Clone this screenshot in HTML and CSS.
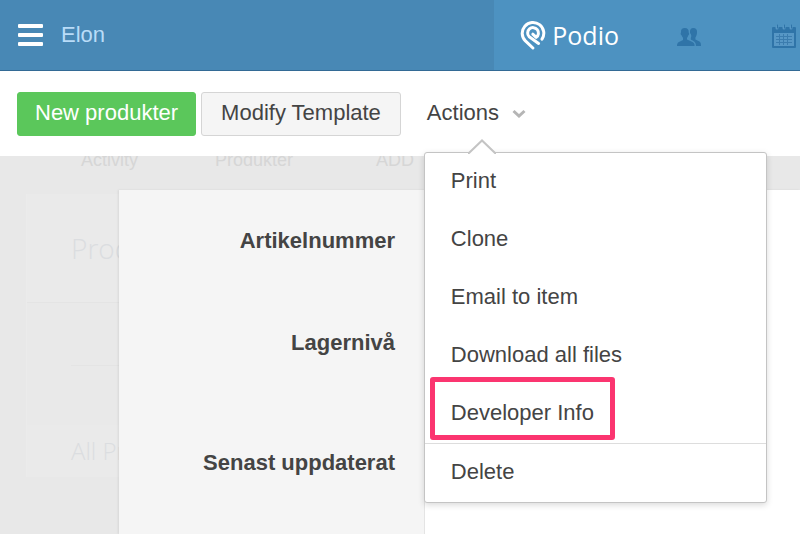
FILE: index.html
```html
<!DOCTYPE html>
<html lang="en">
<head>
<meta charset="UTF-8">
<meta name="viewport" content="width=device-width, initial-scale=1.0">
<title>Elon - Podio</title>
<link rel="stylesheet" href="styles.css">
</head>
<body>
<header class="header">
    <div class="workspace">
        <button class="menu-toggle" aria-label="Open menu">
            <span class="bar"></span>
            <span class="bar"></span>
            <span class="bar"></span>
        </button>
        <a class="workspace-name" href="#">Elon</a>
    </div>
    <nav class="main-nav">
        <a class="logo" href="#">
            <svg width="26" height="30" viewBox="0 0 26 30" fill="none" stroke="#fff" stroke-width="3" stroke-linecap="round" stroke-linejoin="round">
                <path d="M12.9 28 L5.4 20.9 A10.8 10.8 0 1 1 22 19.2"/>
                <path d="M18.600 23.400 L9.200 16.800 A5.4 5.4 0 1 1 16.200 17.400 L12.8 14.2"/>
            </svg>
            <span>Podio</span>
        </a>
        <a class="nav-icon" href="#" aria-label="People">
            <svg width="26" height="26" viewBox="0 0 26 26" fill="#2f74a8">
                <path d="M14 9 C13.6 5.500 15 4 17.200 4 C20 4 21.400 5.800 21 9 C20.800 11.400 20 12.400 19.400 13.400 L19.400 15.500 L23.500 17.600 C24.600 18.300 25 19.500 25 22 L20 22 C19.800 18.800 19 17.600 15.500 16 L14.800 15.500 L14.800 14 C15.600 12.600 15.500 10.500 14 9 Z"/>
                <path d="M5 8.500 C4.700 5.300 6.200 4 8.800 4 C11.600 4 13 5.600 12.700 8.500 C13.600 9.400 13 11 12.200 11.500 C11.900 12.700 11.500 13.300 11 13.800 L11 15.600 L16 17.800 C18 18.700 18.600 19.800 18.600 22 L1 22 C1 19.500 1.600 18.600 3 17.900 L7 15.900 L7 13.800 C6.400 13.200 6 12.500 5.700 11.500 C4.800 11 4.300 9.400 5 8.500 Z"/>
            </svg>
        </a>
        <a class="nav-icon" href="#" aria-label="Calendar">
            <svg width="26" height="26" viewBox="0 0 26 26">
                <path fill="#2f74a8" d="M2 3 H24 Q25 3 25 4 V23 Q25 24 24 24 H2 Q1 24 1 23 V4 Q1 3 2 3 Z"/>
                <path fill="#5797c5" d="M3 9 H23 V22 H3 Z"/>
                <path stroke="#3b7cae" d="M5 12.500 H21 M5 15.500 H21 M5 18.500 H21 M8.500 10 V21 M12.500 10 V21 M16.500 10 V21"/>
                <path stroke="#5797c5" stroke-width="3" stroke-linecap="round" d="M6 3 V4 M13 3 V4 M20 3 V4"/>
                <path stroke="#2f74a8" stroke-linecap="round" d="M6.500 1 V4 M13.500 1 V4 M20.500 1 V4"/>
            </svg>
        </a>
    </nav>
</header>

<div class="toolbar">
    <button class="btn btn-primary">New produkter</button>
    <button class="btn btn-default">Modify Template</button>
    <div class="dropdown">
        <button class="dropdown-toggle" aria-expanded="true">
            Actions
            <svg width="14" height="10" viewBox="0 0 14 10" fill="none" stroke="#b5b5b5" stroke-width="3">
                <path d="M1.500 3 L7 8 L12.500 3"/>
            </svg>
        </button>
        <div class="dropdown-menu">
            <svg class="arrow" width="28" height="15" viewBox="0 0 28 15">
                <path fill="#fff" stroke="#c4c4c4" stroke-width="2" d="M0 15 L14 1.500 L28 15"/>
            </svg>
            <ul>
                <li><a href="#">Print</a></li>
                <li><a href="#">Clone</a></li>
                <li><a href="#">Email to item</a></li>
                <li><a href="#">Download all files</a></li>
                <li><a href="#"><span class="highlight">Developer Info</span></a></li>
                <li class="separated"><a href="#">Delete</a></li>
            </ul>
        </div>
    </div>
</div>

<main class="content">
    <!-- Faded app page behind the item -->
    <div class="backdrop">
        <div class="tabs">
            <span>Activity</span>
            <span>Produkter</span>
            <span class="add">ADD</span>
        </div>
        <div class="app">
            <h1>Produkter</h1>
            <div class="app-body"><hr></div>
            <h2>All Produkter</h2>
        </div>
    </div>

    <!-- Item -->
    <div class="item">
        <dl class="fields">
            <dt>Artikelnummer</dt>
            <dt>Lagernivå</dt>
            <dt class="updated">Senast uppdaterat</dt>
        </dl>
        <div class="values"></div>
    </div>
</main>
</body>
</html>
```
FILE: styles.css
```css
* {
    box-sizing: border-box;
}
body {
    display: flex;
    flex-direction: column;
    min-height: 100vh;
    margin: 0;
    font-family: "Liberation Sans", Arial, sans-serif;
    font-size: 22px;
    color: #444;
    background-color: #fff;
}
a {
    color: inherit;
    text-decoration: none;
}
button {
    font: inherit;
    color: inherit;
    cursor: pointer;
}
svg {
    display: block;
}

/* Header */
.header {
    display: flex;
    height: 71px;
    background-color: #4888b5;
    border-bottom: 1px solid #336a95;
}
.workspace {
    display: flex;
    flex: 1;
    align-items: center;
    gap: 18px;
    padding-left: 18px;
}
.menu-toggle {
    display: flex;
    flex-direction: column;
    gap: 5px;
    padding: 0;
    border: none;
    background: none;
}
.bar {
    width: 25px;
    height: 4px;
    border-radius: 1px;
    background-color: #fff;
}
.workspace-name {
    color: #b9dcf8;
}
.main-nav {
    display: flex;
    align-items: center;
    padding: 0 3px 0 26px;
    background-color: #4d92c1;
}
.logo {
    display: flex;
    align-items: center;
    gap: 6px;
    margin-right: 57px;
    font-family: "Open Sans", sans-serif;
    font-size: 25px;
    font-weight: 500;
    color: #fff;
}
.nav-icon {
    padding-top: 3px;
}
.nav-icon + .nav-icon {
    margin-left: 69px;
}

/* Toolbar */
.toolbar {
    display: flex;
    align-items: center;
    gap: 5px;
    height: 85px;
    padding: 0 17px;
}
.btn {
    height: 44px;
    padding: 0 17px 2px;
    border: 1px solid #d5d5d5;
    border-radius: 3px;
}
.btn-primary {
    border-color: #5bc75b;
    background-color: #5bc75b;
    color: #fff;
}
.btn-default {
    padding: 0 19px 2px;
    background-color: #f5f5f5;
}
.dropdown {
    position: relative;
    margin-left: 18px;
}
.dropdown-toggle {
    display: flex;
    align-items: center;
    gap: 13px;
    height: 44px;
    padding: 0 3px 2px;
    border: none;
    background: none;
}
.dropdown-menu {
    position: absolute;
    z-index: 10;
    top: 60px;
    left: 0;
    width: 343px;
    border: 1px solid #c4c4c4;
    border-radius: 3px;
    background-color: #fff;
    box-shadow: 0 2px 6px rgba(0, 0, 0, 0.15);
}
.dropdown-menu ul {
    margin: 0;
    padding: 0;
    list-style: none;
}
.dropdown-menu a {
    display: block;
    padding: 0 26px 2px;
    line-height: 56px;
}
.arrow {
    position: absolute;
    top: -14px;
    left: 43px;
}
.separated {
    border-top: 1px solid #ddd;
}
.highlight {
    position: relative;
}
.highlight::after {
    content: "";
    position: absolute;
    inset: -23px -21px -15px;
    border: 5px solid #fb3570;
    border-radius: 3px;
}

/* Content */
.content {
    position: relative;
    flex: 1;
    overflow: hidden;
    background-color: #e8e8e8;
}
.tabs {
    display: flex;
    gap: 77px;
    height: 44px;
    margin-top: -6px;
    padding-left: 81px;
    font-size: 18px;
    line-height: 20px;
    color: #d6d6d6;
}
.add {
    padding-left: 6px;
}
.app {
    margin-left: 26px;
    border-left: 1px solid #ebebeb;
    background-color: #e9e9e9;
    font-family: "Open Sans", sans-serif;
    color: #dbdde0;
}
.app h1,
.app h2 {
    margin: 0;
    padding-left: 44px;
    font-weight: 300;
    background-color: #eaeaea;
}
.app h1 {
    font-size: 28px;
    line-height: 108px;
    border-bottom: 1px solid #e4e4e4;
}
.app h2 {
    font-size: 24px;
    line-height: 52px;
}
.app-body {
    height: 122px;
    padding: 62px 0 0 44px;
}
.app-body hr {
    margin: 0;
    border: none;
    border-top: 1px solid #e4e4e4;
}
.item {
    position: absolute;
    inset: 34px 0 0 119px;
    display: flex;
    background-color: #fff;
    box-shadow: -1px 0 2px rgba(0, 0, 0, 0.08);
}
.fields {
    width: 306px;
    margin: 0;
    padding: 38px 29px 0 0;
    background-color: #f5f5f5;
    border-right: 1px solid #e4e4e4;
    font-weight: bold;
    line-height: 26px;
    text-align: right;
}
.fields dt {
    margin-bottom: 76px;
}
.fields .updated {
    margin-top: 94px;
}
.values {
    flex: 1;
}
```
